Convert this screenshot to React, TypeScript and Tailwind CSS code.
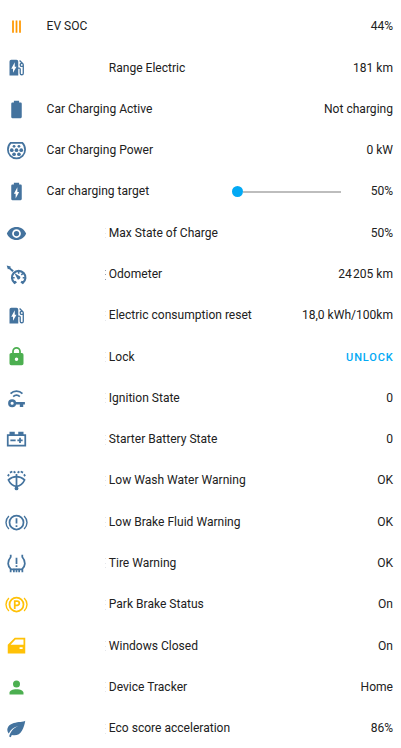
import type { ReactNode } from "react";
import clsx from "clsx";

const batteryBody =
  "M16.67,4H15V2H9V4H7.33A1.33,1.33 0 0,0 6,5.33V20.67C6,21.4 6.6,22 7.33,22H16.67A1.33,1.33 0 0,0 18,20.67V5.33C18,4.6 17.4,4 16.67,4Z";

const line = { fill: "none", stroke: "currentColor", strokeWidth: 2 };

const icons: Record<string, ReactNode> = {
  tally: <path d="M7,5H9V19H7ZM11,5H13V19H11ZM15,5H17V19H15Z" />,
  station: (
    <path d="M19.77,7.23L19.78,7.22L16.06,3.5L15,4.56L17.11,6.67C16.17,7.03 15.5,7.93 15.5,9A2.5,2.5 0 0,0 18,11.5C18.36,11.5 18.69,11.42 19,11.29V18.5A1,1 0 0,1 18,19.5A1,1 0 0,1 17,18.5V14A2,2 0 0,0 15,12H14V5A2,2 0 0,0 12,3H6A2,2 0 0,0 4,5V21H14V13.5H15.5V18.5A2.5,2.5 0 0,0 18,21A2.5,2.5 0 0,0 20.5,18.5V9C20.5,8.31 20.22,7.68 19.77,7.23M18,10A1,1 0 0,1 17,9A1,1 0 0,1 18,8A1,1 0 0,1 19,9A1,1 0 0,1 18,10M8,18V13.5H6L10,6V11H12L8,18Z" />
  ),
  battery: <path d={batteryBody} />,
  charging: <path fillRule="evenodd" d={batteryBody + "M11,20V14.5H9L13,7V12.5H15Z"} />,
  plug: (
    <>
      <path {...line} d="M5.3,3.2H18.7C20.7,5.2 21.8,8 21.8,11.1A9.8,10 0 0,1 2.2,11.1C2.2,8 3.3,5.2 5.3,3.2Z" />
      <circle cx="9.2" cy="7.2" r="1.6" />
      <circle cx="14.8" cy="7.2" r="1.6" />
      <circle cx="6.6" cy="11.6" r="2.1" />
      <circle cx="12" cy="11.6" r="2.1" />
      <circle cx="17.4" cy="11.6" r="2.1" />
      <circle cx="9.2" cy="16.3" r="2.1" />
      <circle cx="14.8" cy="16.3" r="2.1" />
    </>
  ),
  eye: (
    <path d="M12,9A3,3 0 0,0 9,12A3,3 0 0,0 12,15A3,3 0 0,0 15,12A3,3 0 0,0 12,9M12,17A5,5 0 0,1 7,12A5,5 0 0,1 12,7A5,5 0 0,1 17,12A5,5 0 0,1 12,17M12,4.5C7,4.5 2.73,7.61 1,12C2.73,16.39 7,19.5 12,19.5C17,19.5 21.27,16.39 23,12C21.27,7.61 17,4.5 12,4.5Z" />
  ),
  cruise: (
    <>
      <path {...line} strokeWidth={2.4} d="M11.8,20.2L9.8,21.6A7.7,7.7 0 1,1 19.2,21.6L17.2,20.2" />
      <path {...line} strokeWidth={1.7} d="M7.5,15.7H9.9M19.1,15.7H21.5M17.5,12.5L19.3,10.7M14.5,8.6V11.2" />
      <path d="M9.6,10.4L16.2,14.3A2.3,2.3 0 0,1 13.2,17.4Z" />
      <path d="M0.8,1.6L5.4,2.8L5.1,4.2L8.9,7.3L7.3,9L3.4,5.8L2.1,6Z" />
    </>
  ),
  lock: (
    <path d="M12,17A2,2 0 0,0 14,15C14,13.89 13.1,13 12,13A2,2 0 0,0 10,15A2,2 0 0,0 12,17M18,8A2,2 0 0,1 20,10V20A2,2 0 0,1 18,22H6A2,2 0 0,1 4,20V10C4,8.89 4.9,8 6,8H7V6A5,5 0 0,1 12,1A5,5 0 0,1 17,6V8H18M12,3A3,3 0 0,0 9,6V8H15V6A3,3 0 0,0 12,3Z" />
  ),
  key: (
    <>
      <path {...line} d="M5.2,6.4C9,2.6 15,2.6 18.8,6.4M8.2,9.8C10.4,7.7 13.6,7.7 15.8,9.8" />
      <circle {...line} cx="7" cy="17.4" r="3.2" strokeWidth={2.8} />
      <path d="M10.6,16H21.6V18.8H19.7V21.6H15.8V18.8H10.6Z" />
    </>
  ),
  carBattery: <path d="M4,3V6H1V20H23V6H20V3H14V6H10V3H4M3,8H21V18H3V8M15,10V12H13V14H15V16H17V14H19V12H17V10H15M5,12V14H11V12H5Z" />,
  washer: (
    <>
      <path {...line} d="M2.8,11.4C8,6.4 16,6.4 21.2,11.4C19.5,15.3 16,18.2 12,18.8C8,18.2 4.5,15.3 2.8,11.4Z" />
      <path {...line} d="M12,4.5V20" />
      <circle cx="12" cy="21" r="2.2" />
      <path {...line} d="M2.1,7L3.5,5M4.5,3L7.2,1.8M8.7,1.7L10.8,3.2M13.2,3.2L15.3,1.7M16.8,1.8L19.5,3M20.5,5L21.9,7" />
    </>
  ),
  brake: (
    <>
      <circle {...line} cx="12" cy="12" r="8" />
      <path d="M11,7H13V13H11ZM11,15H13V17H11Z" />
      <path {...line} strokeWidth={1.6} d="M3.3,4.5C-1.1,8.8 -1.1,15.2 3.3,19.5M20.7,4.5C25.1,8.8 25.1,15.2 20.7,19.5" />
    </>
  ),
  tire: (
    <>
      <path {...line} d="M5.4,2V4.6C1.2,9.5 1.6,15.2 5.8,18.7H18.2C22.4,15.2 22.8,9.5 18.6,4.6V2" />
      <path d="M11,5.5H13V12.5H11ZM11,14H13V16H11ZM4.3,18H6.3V22H4.3ZM8,18H10V22H8ZM11,18H13V22H11ZM14,18H16V22H14ZM17.7,18H19.7V22H17.7Z" />
    </>
  ),
  park: (
    <>
      <circle {...line} cx="12" cy="12" r="8" />
      <path {...line} d="M10,17V8H12.7A2.5,2.5 0 0,1 12.7,13H10" />
      <path {...line} strokeWidth={1.6} d="M3.3,4.5C-1.1,8.8 -1.1,15.2 3.3,19.5M20.7,4.5C25.1,8.8 25.1,15.2 20.7,19.5" />
    </>
  ),
  door: <path fillRule="evenodd" d="M10,3H22V21H2V11L10,3ZM10.8,5L5.2,11H20V5H10.8ZM15.5,14H19V16H15.5Z" />,
  account: (
    <path d="M12,4A4,4 0 0,1 16,8A4,4 0 0,1 12,12A4,4 0 0,1 8,8A4,4 0 0,1 12,4M12,14C16.42,14 20,15.79 20,18V20H4V18C4,15.79 7.58,14 12,14Z" />
  ),
  leaf: (
    <path d="M22,3C19.8,4.5 14,4.2 9,5.6C3,7.3 1.2,11.2 1.6,14.2C1.8,15.8 2.5,17 3.2,17.7C5.8,12.8 9,10.3 14.3,9.2C8.4,11.5 5.3,15.2 3.6,21.2L5.5,22L6.6,19.4C16.5,22 20.5,12 22,3Z" />
  ),
};

type Row = { icon: string; name: string; value: string; color?: string; flush?: boolean };

const rows: Row[] = [
  { icon: "tally", name: "EV SOC", value: "44%", color: "text-[#ff9800]", flush: true },
  { icon: "station", name: "Range Electric", value: "181 km" },
  { icon: "battery", name: "Car Charging Active", value: "Not charging", flush: true },
  { icon: "plug", name: "Car Charging Power", value: "0 kW", flush: true },
  { icon: "charging", name: "Car charging target", value: "50%", flush: true },
  { icon: "eye", name: "Max State of Charge", value: "50%" },
  { icon: "cruise", name: "Odometer", value: "24\u200a205 km" },
  { icon: "station", name: "Electric consumption reset", value: "18,0 kWh/100km" },
  { icon: "lock", name: "Lock", value: "UNLOCK", color: "text-[#4caf50]" },
  { icon: "key", name: "Ignition State", value: "0" },
  { icon: "carBattery", name: "Starter Battery State", value: "0" },
  { icon: "washer", name: "Low Wash Water Warning", value: "OK" },
  { icon: "brake", name: "Low Brake Fluid Warning", value: "OK" },
  { icon: "tire", name: "Tire Warning", value: "OK" },
  { icon: "park", name: "Park Brake Status", value: "On", color: "text-[#ffc107]" },
  { icon: "door", name: "Windows Closed", value: "On", color: "text-[#ffc107]" },
  { icon: "account", name: "Device Tracker", value: "Home", color: "text-[#4caf50]" },
  { icon: "leaf", name: "Eco score acceleration", value: "86%" },
];

function Slider() {
  return (
    <div className="mr-[30px] flex w-[109px] items-center">
      <span className="size-[11px] shrink-0 rounded-full bg-[#03a9f4]" />
      <span className="h-[1.5px] grow bg-[#bdbdbd]" />
    </div>
  );
}

function Dots({ dark }: { dark: boolean }) {
  const dot = clsx("size-px", dark ? "bg-gray-400" : "bg-gray-200");
  return (
    <span className="flex h-[10px] flex-col justify-between">
      <span className={dot} />
      <span className={dot} />
      <span className={dot} />
    </span>
  );
}

function EntityRow({ row }: { row: Row }) {
  return (
    <li className="flex h-[41.29px] items-center">
      <svg
        viewBox="0 0 24 24"
        fill="currentColor"
        className={clsx("mb-[0.4px] size-[21px] shrink-0 overflow-visible", row.color ?? "text-[#44739e]")}
      >
        {icons[row.icon]}
      </svg>
      {row.flush ? (
        <span className="w-[20px] shrink-0" />
      ) : (
        <span className="flex w-[82.2px] shrink-0 justify-end pr-[3px]">
          {row.name !== "Range Electric" && <Dots dark={row.icon === "cruise"} />}
        </span>
      )}
      <span className="grow whitespace-nowrap">{row.name}</span>
      {row.icon === "charging" && <Slider />}
      {row.icon === "lock" ? (
        <button className="-mr-[0.5px] text-[11px] font-medium tracking-[0.85px] text-[#03a9f4]">{row.value}</button>
      ) : (
        <span className="whitespace-nowrap">{row.value}</span>
      )}
    </li>
  );
}

export default function App() {
  return (
    <main className="h-[748px] overflow-hidden bg-white pt-[6.2px] pr-[8px] pl-[5.6px] font-[Roboto,sans-serif] text-[12.06px] leading-[17px] text-[#212121]">
      <ul>
        {rows.map((row) => (
          <EntityRow key={row.name} row={row} />
        ))}
      </ul>
    </main>
  );
}
